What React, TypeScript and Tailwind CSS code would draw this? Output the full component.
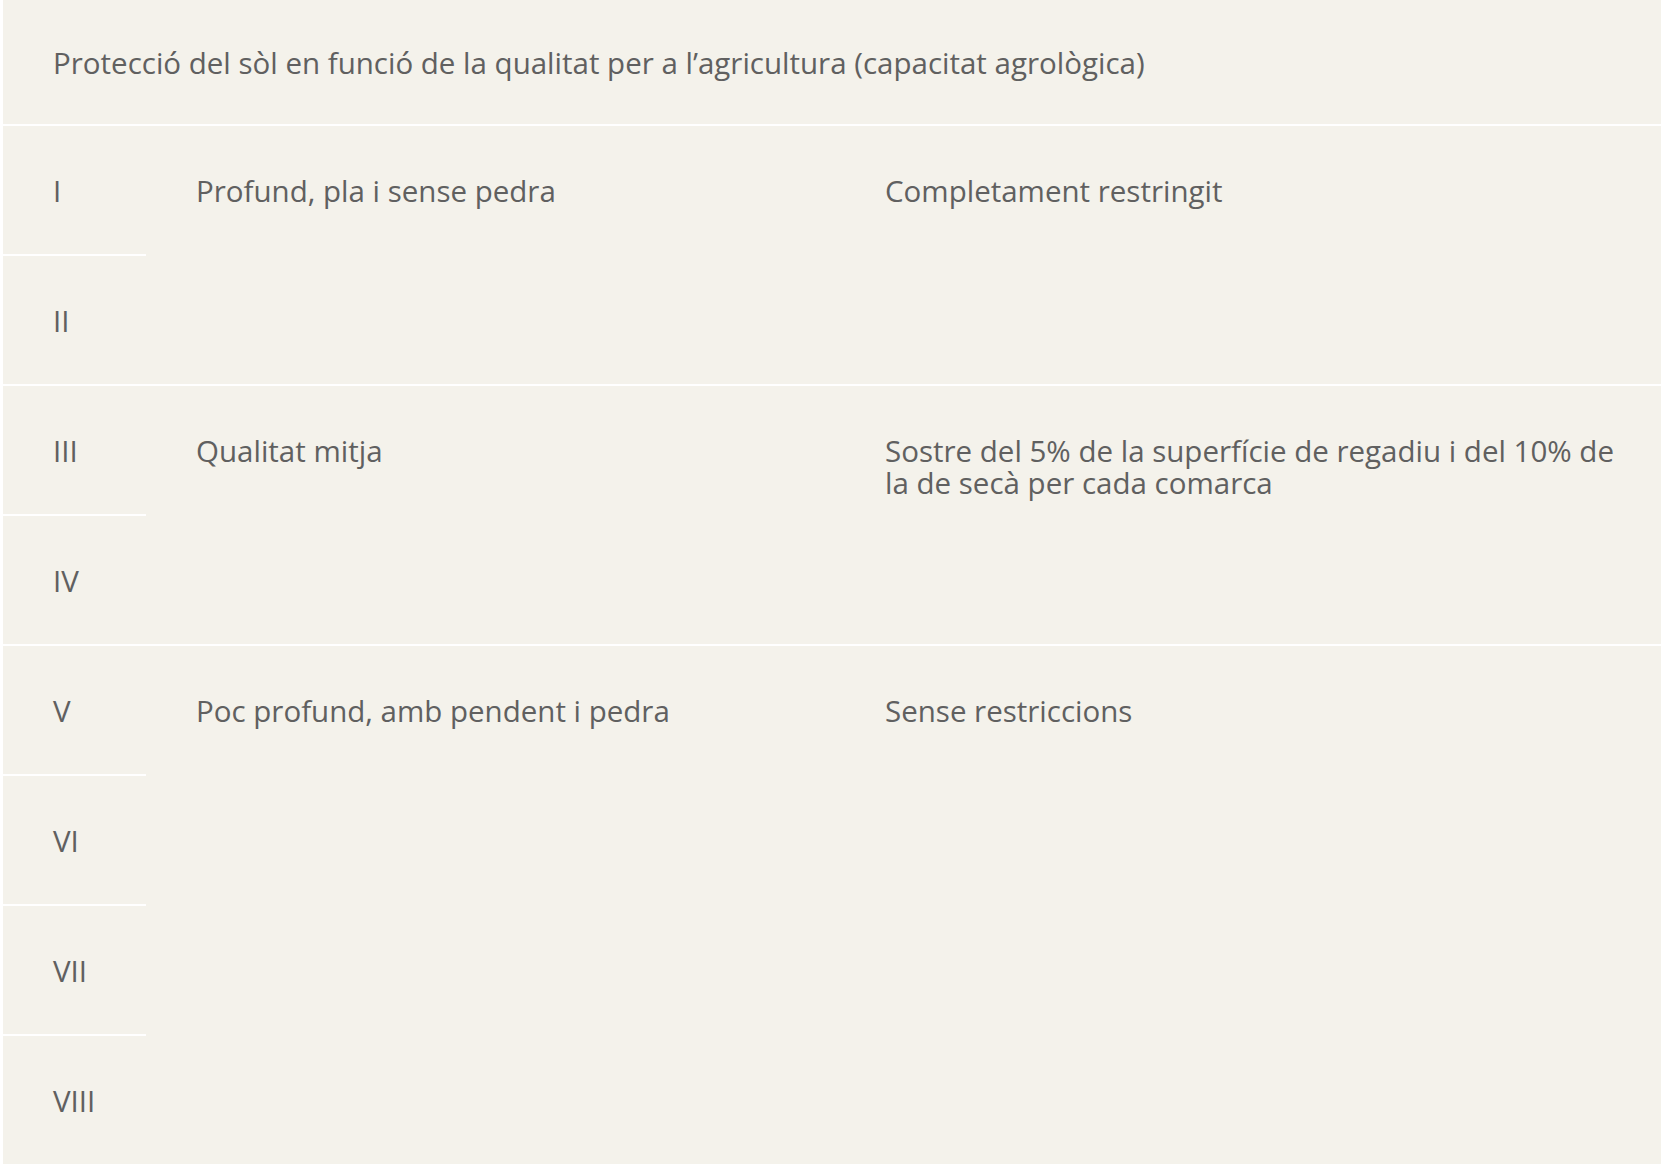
import React from 'react';

type Group = {
    labels: string[];
    quality: string;
    limit: string;
};

const groups: Group[] = [
    { labels: ['I', 'II'], quality: 'Profund, pla i sense pedra', limit: 'Completament restringit' },
    {
        labels: ['III', 'IV'],
        quality: 'Qualitat mitja',
        limit: 'Sostre del 5% de la superfície de regadiu i del 10% de la de secà per cada comarca',
    },
    { labels: ['V', 'VI', 'VII', 'VIII'], quality: 'Poc profund, amb pendent i pedra', limit: 'Sense restriccions' },
];

export default function App() {
    return (
        <div className="min-h-screen bg-[#f4f2eb] border-l-[3px] border-white text-[#606060] text-[29.5px] leading-[32px] font-['Open_Sans',sans-serif]">
            <div className="h-[126px] flex items-center pl-[50px] pt-[2px] border-b-2 border-white">
                Protecció del sòl en funció de la qualitat per a l’agricultura (capacitat agrològica)
            </div>

            {groups.map((g, gi) => (
                <div key={gi} className="flex border-b-2 border-white">
                    <div className="w-[143px] shrink-0 flex flex-col">
                        {g.labels.map((label, li) => (
                            <div
                                key={label}
                                className={`h-[128px] flex items-center pl-[50px] pt-[2px] ${
                                    li < g.labels.length - 1 ? 'h-[130px] border-b-2 border-white' : ''
                                }`}
                            >
                                {label}
                            </div>
                        ))}
                    </div>
                    <div className="w-[689px] shrink-0 pl-[50px] pt-[49px]">{g.quality}</div>
                    <div className="flex-1 pl-[50px] pr-[40px] pt-[49px]">{g.limit}</div>
                </div>
            ))}
        </div>
    );
}
